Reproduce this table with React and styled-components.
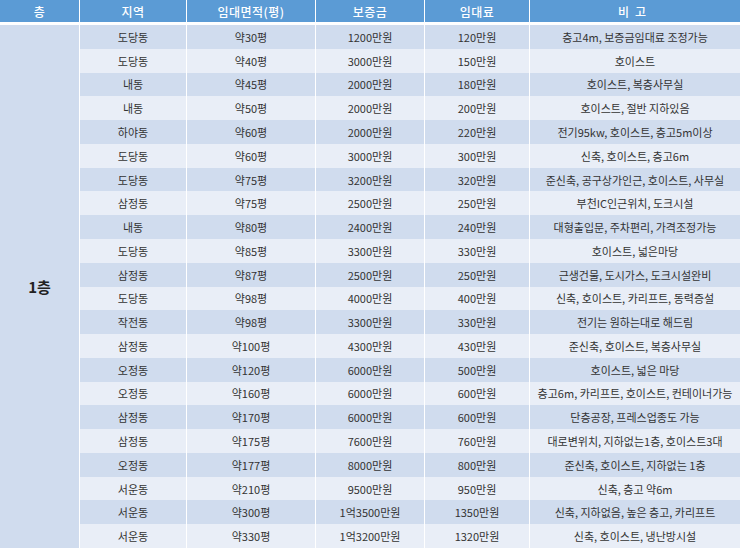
import React from 'react';
import styled, { createGlobalStyle } from 'styled-components';

const GlobalStyle = createGlobalStyle`
  html, body {
    margin: 0;
    padding: 0;
    background: #fff;
  }
  body {
    font-family: "Noto Sans CJK KR", "Noto Sans", sans-serif;
  }
`;

const Table = styled.div`
  display: grid;
  grid-template-columns: 79px 106px 128px 108px 104px 210px;
  grid-template-rows: 25px repeat(22, 1fr);
  column-gap: 1px;
  width: 740px;
  height: 548px;
  background: #fff;
`;

const Head = styled.div`
  display: flex;
  align-items: center;
  justify-content: center;
  background: #5b9bd5;
  border-bottom: 3px solid #fff;
  color: #fff;
  font-size: 12px;
  font-weight: 500;
  letter-spacing: ${p => (p.$wide ? '6px' : '0.5px')};
`;

const Floor = styled.div`
  grid-row: 2 / span 22;
  display: flex;
  align-items: center;
  justify-content: center;
  background: #d0dcee;
  color: #222;
  font-size: 15px;
  font-weight: 700;
`;

const Cell = styled.div`
  display: flex;
  align-items: center;
  justify-content: center;
  background: ${p => (p.$odd ? '#d0dcee' : '#e9eef7')};
  color: #333;
  font-size: 11px;
  white-space: nowrap;
`;

const rows = [
  ['도당동', '약30평', '1200만원', '120만원', '층고4m, 보증금임대료 조정가능'],
  ['도당동', '약40평', '3000만원', '150만원', '호이스트'],
  ['내동', '약45평', '2000만원', '180만원', '호이스트, 복층사무실'],
  ['내동', '약50평', '2000만원', '200만원', '호이스트, 절반 지하있음'],
  ['하야동', '약60평', '2000만원', '220만원', '전기95kw, 호이스트, 층고5m이상'],
  ['도당동', '약60평', '3000만원', '300만원', '신축, 호이스트, 층고6m'],
  ['도당동', '약75평', '3200만원', '320만원', '준신축, 공구상가인근, 호이스트, 사무실'],
  ['삼정동', '약75평', '2500만원', '250만원', '부천IC인근위치, 도크시설'],
  ['내동', '약80평', '2400만원', '240만원', '대형출입문, 주차편리, 가격조정가능'],
  ['도당동', '약85평', '3300만원', '330만원', '호이스트, 넓은마당'],
  ['삼정동', '약87평', '2500만원', '250만원', '근생건물, 도시가스, 도크시설완비'],
  ['도당동', '약98평', '4000만원', '400만원', '신축, 호이스트, 카리프트, 동력증설'],
  ['작전동', '약98평', '3300만원', '330만원', '전기는 원하는대로 해드림'],
  ['삼정동', '약100평', '4300만원', '430만원', '준신축, 호이스트, 복층사무실'],
  ['오정동', '약120평', '6000만원', '500만원', '호이스트, 넓은 마당'],
  ['오정동', '약160평', '6000만원', '600만원', '층고6m, 카리프트, 호이스트, 컨테이너가능'],
  ['삼정동', '약170평', '6000만원', '600만원', '단층공장, 프레스업종도 가능'],
  ['삼정동', '약175평', '7600만원', '760만원', '대로변위치, 지하없는1층, 호이스트3대'],
  ['오정동', '약177평', '8000만원', '800만원', '준신축, 호이스트, 지하없는 1층'],
  ['서운동', '약210평', '9500만원', '950만원', '신축, 층고 약6m'],
  ['서운동', '약300평', '1억3500만원', '1350만원', '신축, 지하없음, 높은 층고, 카리프트'],
  ['서운동', '약330평', '1억3200만원', '1320만원', '신축, 호이스트, 냉난방시설'],
];

export default function App() {
  return (
    <>
      <GlobalStyle />
      <Table>
        <Head>층</Head>
        <Head>지역</Head>
        <Head>임대면적(평)</Head>
        <Head>보증금</Head>
        <Head>임대료</Head>
        <Head $wide>비고</Head>
        <Floor>1층</Floor>
        {rows.map((r, i) =>
          r.map((v, j) => (
            <Cell key={`${i}-${j}`} $odd={i % 2 === 0} style={{ gridColumn: j + 2 }}>
              {v}
            </Cell>
          ))
        )}
      </Table>
    </>
  );
}
